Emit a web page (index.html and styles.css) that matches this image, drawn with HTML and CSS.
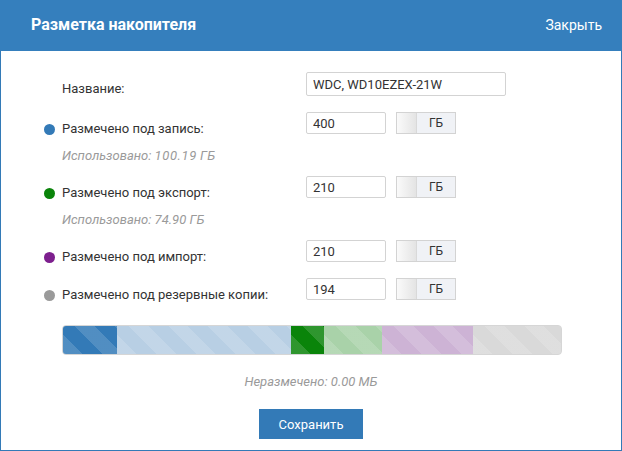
FILE: index.html
```html
<!DOCTYPE html>
<html lang="ru">
<head>
    <meta charset="UTF-8">
    <title>Разметка накопителя</title>
    <link rel="stylesheet" href="styles.css">
</head>
<body>
    <div class="dialog">
        <header class="dialog-head">
            <h1 class="dialog-title">Разметка накопителя</h1>
            <span class="dialog-close">Закрыть</span>
        </header>

        <div class="dialog-body">
            <div class="group group-name">
                <div class="field">
                    <span class="field-label no-dot">Название:</span>
                    <input class="inp inp-name" type="text" value="WDC, WD10EZEX-21W">
                </div>
            </div>

            <div class="group">
                <div class="field">
                    <span class="dot dot-blue"></span>
                    <span class="field-label">Размечено под запись:</span>
                    <input class="inp" type="text" value="400">
                    <div class="unit"><span class="knob"></span><span class="unit-text">ГБ</span></div>
                </div>
                <div class="used">Использовано: <span class="num">100.19</span> ГБ</div>
            </div>

            <div class="group">
                <div class="field">
                    <span class="dot dot-green"></span>
                    <span class="field-label">Размечено под экспорт:</span>
                    <input class="inp" type="text" value="210">
                    <div class="unit"><span class="knob"></span><span class="unit-text">ГБ</span></div>
                </div>
                <div class="used">Использовано: 74.90 ГБ</div>
            </div>

            <div class="group">
                <div class="field">
                    <span class="dot dot-purple"></span>
                    <span class="field-label">Размечено под импорт:</span>
                    <input class="inp" type="text" value="210">
                    <div class="unit"><span class="knob"></span><span class="unit-text">ГБ</span></div>
                </div>
            </div>

            <div class="group">
                <div class="field">
                    <span class="dot dot-grey"></span>
                    <span class="field-label">Размечено под резервные копии:</span>
                    <input class="inp" type="text" value="194">
                    <div class="unit"><span class="knob"></span><span class="unit-text">ГБ</span></div>
                </div>
            </div>

            <!-- полоса разметки -->
            <div class="bar">
                <div class="seg seg-blue" style="width: 54px"></div>
                <div class="seg seg-blue-lt" style="width: 174px"></div>
                <div class="seg seg-green" style="width: 33px"></div>
                <div class="seg seg-green-lt" style="width: 58px"></div>
                <div class="seg seg-purple-lt" style="width: 91px"></div>
                <div class="seg seg-grey"></div>
            </div>

            <div class="free">Неразмечено: 0.00 МБ</div>

            <div class="actions">
                <button class="btn-save">Сохранить</button>
            </div>
        </div>
    </div>
</body>
</html>
```

FILE: styles.css
```css
* {
    box-sizing: border-box;
}

body {
    margin: 0;
    font-family: Roboto, "Liberation Sans", sans-serif;
    background: #fff;
    color: #333;
}

.dialog {
    width: 622px;
    height: 451px;
    border: 1px solid #337ab7;
    border-top: none;
    background: #fff;
}

.dialog-head {
    height: 51px;
    background: #357fbd;
    color: #fff;
    display: flex;
    align-items: center;
    justify-content: space-between;
    padding: 0 20px 0 31px;
    margin: 0 -1px;
}

.dialog-title {
    margin: 0;
    font-size: 16px;
    font-weight: 700;
    padding-bottom: 2px;
}

.dialog-close {
    font-size: 14px;
    padding-bottom: 2px;
}

.dialog-body {
    padding: 21px 0 0 43px;
}

.group {
    margin-bottom: 12px;
}

.group-name {
    margin-bottom: 14px;
}

.field {
    display: flex;
    align-items: flex-start;
    height: 26px;
}

.dot {
    width: 11px;
    height: 11px;
    border-radius: 50%;
    margin: 12px 7px 0 0;
    flex: none;
}

.dot-blue { background: #337ab7; }
.dot-green { background: #0a840a; }
.dot-purple { background: #7d1f8e; }
.dot-grey { background: #9a9a9a; }

.field-label {
    width: 244px;
    font-size: 13px;
    line-height: 18px;
    padding-top: 8px;
    color: #333;
}

.field-label.no-dot {
    width: 262px;
    padding-left: 18px;
}

.inp {
    width: 80px;
    height: 22px;
    border: 1px solid #d3d3d3;
    border-radius: 2px;
    padding: 0 6px;
    font-family: inherit;
    font-size: 13px;
    color: #333;
    outline: none;
}

.inp-name {
    width: 200px;
    height: 24px;
}

.unit {
    display: flex;
    width: 60px;
    height: 22px;
    margin-left: 10px;
    border: 1px solid #d3d3d3;
}

.knob {
    width: 20px;
    background: linear-gradient(to right, #fafafa, #e4e4e4);
    border-right: 1px solid #d9d9d9;
}

.unit-text {
    flex: 1;
    background: #f0f2f6;
    font-size: 12px;
    line-height: 20px;
    text-align: center;
    color: #333;
}

.used {
    margin-top: 10px;
    margin-left: 18px;
    font-size: 13px;
    line-height: 16px;
    font-style: italic;
    color: #9a9a9a;
    margin-bottom: 11px;
}

.used .num {
    letter-spacing: 0.6px;
}

.bar {
    display: flex;
    width: 500px;
    height: 30px;
    margin: 21px 0 0 18px;
    border-radius: 4px;
    overflow: hidden;
    border: 1px solid #d6d6d6;
    background: #dcdcdc;
}

.seg {
    height: 100%;
    background-image: repeating-linear-gradient(45deg,
        rgba(255, 255, 255, 0.15) 0 14px,
        transparent 14px 28px);
}

.seg-blue { background-color: #337ab7; }
.seg-blue-lt { background-color: #b8cfe4; }
.seg-green { background-color: #0a840a; }
.seg-green-lt { background-color: #a9d2a9; }
.seg-purple-lt { background-color: #cdb3d5; }
.seg-grey { flex: 1; background-color: #d9d9d9; }

.free {
    margin-top: 19px;
    margin-left: -43px;
    text-align: center;
    font-size: 13px;
    line-height: 16px;
    font-style: italic;
    color: #9a9a9a;
}

.actions {
    margin-left: -43px;
    margin-top: 19px;
    display: flex;
    justify-content: center;
}

.btn-save {
    width: 104px;
    height: 30px;
    border: none;
    background: #337ab7;
    color: #fff;
    font-family: inherit;
    font-size: 13px;
    padding: 0;
}
```
